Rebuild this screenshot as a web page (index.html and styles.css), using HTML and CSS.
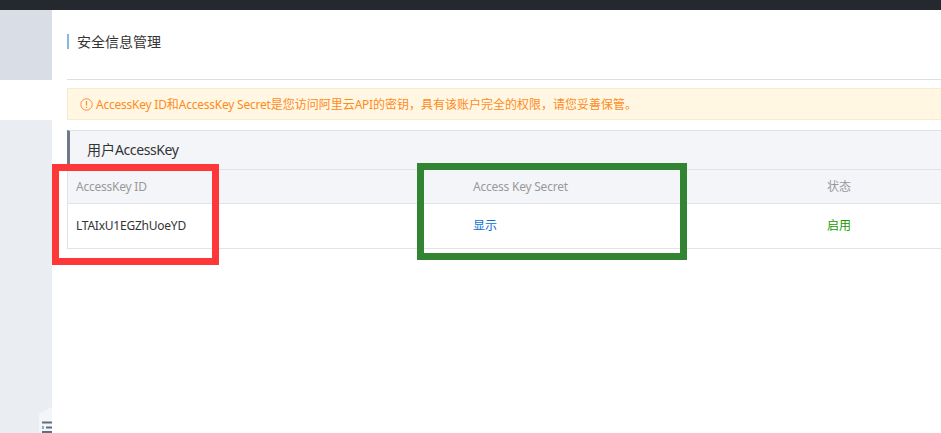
FILE: index.html
```html
<!DOCTYPE html>
<html lang="zh">
<head>
<meta charset="utf-8">
<title>安全信息管理</title>
<link rel="stylesheet" href="styles.css">
</head>
<body>
<div class="topbar"></div>
<div class="layout">
  <aside class="sidebar">
    <div class="side-a"></div>
    <div class="side-b"></div>
    <div class="side-c">
      <div class="tab">
        <svg width="12" height="12" viewBox="0 0 12 12" class="tab-icon"><path d="M2 1.500h10M6 6.500h6M2 11h10" stroke="#5f6f82" stroke-width="2" fill="none"/><path d="M3 5v3" stroke="#5f8fc8" stroke-width="1.500"/></svg>
      </div>
    </div>
  </aside>
  <main class="main">
    <div class="title-row"><h1 class="title">安全信息管理</h1></div>
    <div class="alert"><svg class="alert-icon" width="13" height="13" viewBox="0 0 13 13"><circle cx="6.500" cy="6.500" r="5.700" fill="none" stroke="#ff8a3a" stroke-width="1"/><path d="M6.500 3v4.500M6.500 8.700v1.300" stroke="#ff8a3a" stroke-width="1.200"/></svg><span class="alert-text"><span class="lat">AccessKey ID</span>和<span class="lat">AccessKey Secret</span>是您访问阿里云<span class="lat">API</span>的密钥，具有该账户完全的权限，请您妥善保管。</span></div>
    <section class="panel">
      <div class="panel-head">用户<span class="lat-lg">AccessKey</span></div>
      <div class="row row-head">
        <div class="col col-id lat">AccessKey ID</div>
        <div class="col col-secret lat">Access Key Secret</div>
        <div class="col col-state">状态</div>
      </div>
      <div class="row row-body">
        <div class="col col-id lat">LTAIxU1EGZhUoeYD</div>
        <div class="col col-secret"><a class="link">显示</a></div>
        <div class="col col-state on">启用</div>
      </div>
    </section>
  </main>
</div>
<div class="mark mark-red"></div>
<div class="mark mark-green"></div>
</body>
</html>
```

FILE: styles.css
```css
* { box-sizing: border-box; }
html, body { margin: 0; height: 100%; overflow: hidden; }
body {
  position: relative;
  background: #fff;
  font-family: "Noto Sans", "Noto Sans CJK SC", sans-serif;
  font-size: 12px;
  color: #333;
}
.topbar { height: 10px; background: #23292e; }
.layout { display: flex; height: 423px; }
.sidebar { width: 52px; flex: none; display: flex; flex-direction: column; }
.side-a { height: 70px; background: #d9dee6; }
.side-b { height: 40px; background: #fff; }
.side-c { flex: 1; background: #eaedf2; position: relative; }
.tab {
  position: absolute;
  left: 39px; bottom: 0;
  width: 13px; height: 26px;
  background: #f4f5f7;
  clip-path: polygon(0 7px, 13px 0, 13px 100%, 0 100%);
}
.tab-icon { position: absolute; left: 1px; bottom: 0; }
.main { flex: 1; min-width: 0; padding-left: 15px; }
.title-row { height: 70px; border-bottom: 1px solid #dcdfe3; padding-top: 24px; }
.title {
  margin: 0;
  border-left: 2px solid #88b7e0;
  padding-left: 8px;
  font-size: 14px;
  font-weight: 400;
  line-height: 15px;
  color: #333;
  font-family: "Noto Sans CJK SC", sans-serif;
}
.alert {
  margin-top: 8px;
  width: 890px;
  height: 32px;
  display: flex;
  align-items: center;
  gap: 3px;
  padding-left: 12px;
  background: #fff7e1;
  border: 1px solid #faebc8;
  border-right: 0;
  color: #ff8a1f;
  white-space: nowrap;
}
.alert-icon { flex: none; }
.alert-text { line-height: 16px; padding-top: 2px; }
.lat { letter-spacing: -0.23px; }
.lat-lg { letter-spacing: -0.4px; }
.panel { margin-top: 10px; width: 890px; }
.panel-head {
  height: 40px;
  padding-left: 17px;
  border-top: 1px solid #dfe2e6;
  border-left: 3px solid #6f7a86;
  border-bottom: 1px solid #e1e3e8;
  background: #f4f5f9;
  font-size: 14px;
  line-height: 38px;
  color: #333;
}
.row { display: flex; align-items: center; border-left: 1px solid #e1e3e8; border-bottom: 1px solid #e1e3e8; white-space: nowrap; }
.row-head { height: 34px; background: #f4f5f9; color: #999; }
.row-body { height: 45px; }
.col { line-height: 16px; }
.col-id { width: 405px; padding-left: 8px; flex: none; }
.col-secret { width: 354px; flex: none; }
.col-state { flex: 1; }
.link { color: #0a6fd0; }
.on { color: #1a9a00; }
.mark { position: absolute; border-style: solid; border-width: 7px; }
.mark-red { left: 52px; top: 164px; width: 167px; height: 101px; border-color: #fe3838; }
.mark-green { left: 417px; top: 163px; width: 270px; height: 97px; border-color: #328432; }
```
